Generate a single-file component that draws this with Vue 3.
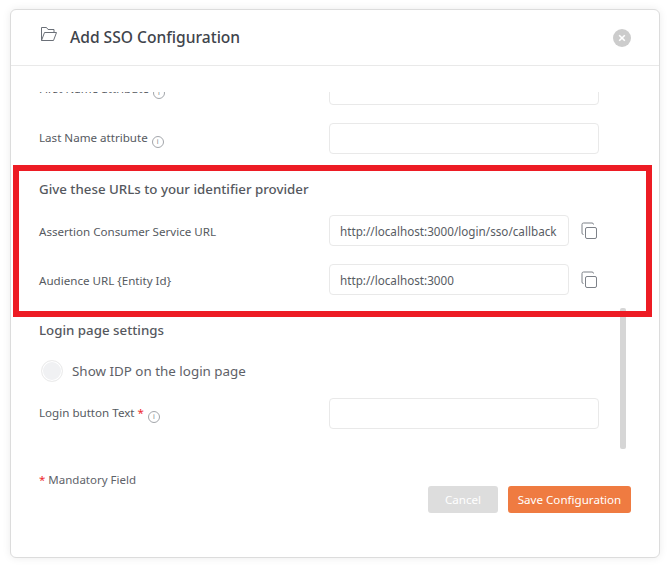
<script setup>
const hiddenRow = { label: 'First Name attribute', info: true }
const urls = [
  { label: 'Assertion Consumer Service URL', value: 'http://localhost:3000/login/sso/callback' },
  { label: 'Audience URL {Entity Id}', value: 'http://localhost:3000' }
]
</script>

<template>
  <div class="page">
    <div class="modal">
      <header class="head">
        <svg class="folder" width="18" height="17" viewBox="0 0 18 17" fill="none" stroke="#6b7078" stroke-width="1">
          <path d="M1.5 14.5V1.5h5l1.5 2h6v3" />
          <path d="M1.5 14.5l3-8h12l-3 8z" />
        </svg>
        <h1 class="title">Add SSO Configuration</h1>
        <button class="close" type="button">
          <svg width="8" height="8" viewBox="0 0 8 8" stroke="#fff" stroke-width="1.6"><path d="M1.2 1.2l5.6 5.6M6.8 1.2L1.2 6.8" /></svg>
        </button>
      </header>

      <div class="body">
        <div class="scroll">
          <div class="content">
            <div class="row first">
              <label class="label">{{ hiddenRow.label }} <span class="info">i</span></label>
              <input class="input" />
            </div>
            <div class="row">
              <label class="label">Last Name attribute <span class="info">i</span></label>
              <input class="input" />
            </div>
            <h2 class="section urls">Give these URLs to your identifier provider</h2>
            <div v-for="u in urls" :key="u.label" class="row">
              <label class="label">{{ u.label }}</label>
              <input class="input short" :value="u.value" readonly />
              <svg class="copy" width="17" height="17" viewBox="0 0 17 17" fill="none" stroke="#7d8188" stroke-width="1">
                <rect x="4.5" y="5.5" width="11" height="11" rx="1.5" />
                <path d="M2.5 12.5A1.5 1.5 0 0 1 1 11V2.5A1.5 1.5 0 0 1 2.5 1H11a1.5 1.5 0 0 1 1.5 1.5" />
              </svg>
            </div>
            <h2 class="section login">Login page settings</h2>
            <div class="toggle-row">
              <span class="toggle"></span>
              <span class="toggle-text">Show IDP on the login page</span>
            </div>
            <div class="row">
              <label class="label">Login button Text <span class="req">*</span> <span class="info">i</span></label>
              <input class="input" />
            </div>
          </div>
        </div>
      </div>

      <footer class="foot">
        <p class="mandatory"><span class="req">*</span> Mandatory Field</p>
        <div class="actions">
          <button class="btn cancel" type="button">Cancel</button>
          <button class="btn save" type="button">Save Configuration</button>
        </div>
      </footer>

      <div class="thumb"></div>
    </div>
    <div class="highlight"></div>
  </div>
</template>

<style>
html, body { margin: 0; background: #fff; }
</style>

<style scoped>
.page {
  position: relative;
  width: 667px;
  height: 565px;
  padding: 9px 0 0 10px;
  box-sizing: border-box;
  overflow: hidden;
  font-family: "Noto Sans", "Open Sans", sans-serif;
  color: #4d5159;
}
.modal {
  position: relative;
  width: 650px;
  height: 549px;
  box-sizing: border-box;
  border: 1px solid #dcdcdc;
  border-radius: 6px;
  background: #fff;
  box-shadow: 0 0 8px rgba(0, 0, 0, 0.08);
  display: flex;
  flex-direction: column;
}
.head {
  height: 56px;
  flex: none;
  box-sizing: border-box;
  border-bottom: 1px solid #e9e9e9;
  display: flex;
  align-items: center;
  padding: 0 28px 0 29px;
}
.folder { margin: -6px 12px 0 0; flex: none; }
.title {
  flex: 1;
  margin: -1px 0 0;
  font-size: 15.6px;
  font-weight: 500;
  color: #3f444c;
}
.close {
  width: 18px;
  height: 18px;
  border: 0;
  padding: 0;
  border-radius: 50%;
  background: #cccccc;
  display: flex;
  align-items: center;
  justify-content: center;
}
.body { padding-top: 26px; flex: none; }
.scroll { height: 357px; overflow: hidden; }
.content { margin-top: -18px; padding-left: 28px; }
.row {
  display: flex;
  align-items: center;
  height: 31px;
  margin-bottom: 18px;
}
.label {
  width: 290px;
  flex: none;
  padding-top: 1px;
  font-size: 11.6px;
  color: #565a61;
}
.input {
  width: 270px;
  height: 31px;
  box-sizing: border-box;
  border: 1px solid #e9e9e9;
  border-radius: 4px;
  padding: 0 10px;
  font: inherit;
  font-size: 11.7px;
  color: #585c63;
  outline: none;
  background: #fff;
}
.input.short { width: 240px; }
.copy { margin-left: 12px; flex: none; }
.info {
  display: inline-flex;
  align-items: center;
  justify-content: center;
  width: 10px;
  height: 10px;
  margin-left: 1px;
  border: 1px solid #a3a6ab;
  border-radius: 50%;
  font-size: 7px;
  line-height: 1;
  color: #80848a;
  vertical-align: -2px;
}
.req { color: #ee2a2e; }
.section {
  margin: 0;
  font-size: 13.3px;
  font-weight: 500;
  color: #55585e;
}
.urls { margin: 26px 0 17px; }
.login { margin-top: 26px; }
.toggle-row {
  display: flex;
  align-items: center;
  margin: 21px 0 16px 2px;
}
.toggle {
  width: 22px;
  height: 22px;
  box-sizing: border-box;
  border-radius: 50%;
  border: 1px solid #ececec;
  background: #f0f1f3;
  box-shadow: inset 0 0 0 1px #fff;
}
.toggle-text { margin-left: 9px; font-size: 13.4px; color: #5e6167; }
.foot {
  flex: 1;
  position: relative;
  padding: 0 28px;
}
.mandatory { margin: 0; padding-top: 23px; font-size: 11.5px; color: #5e6269; }
.actions {
  position: absolute;
  right: 28px;
  top: 37px;
  display: flex;
  gap: 10px;
}
.btn {
  height: 27px;
  border: 0;
  border-radius: 3px;
  font: inherit;
  font-size: 11.6px;
  color: #fff;
}
.cancel { width: 70px; background: #dddddd; }
.save { width: 123px; background: #ef7b41; }
.thumb {
  position: absolute;
  left: 609px;
  top: 298px;
  width: 6px;
  height: 141px;
  border-radius: 2px;
  background: #d6d6d6;
}
.highlight {
  position: absolute;
  left: 13px;
  top: 165px;
  width: 639px;
  height: 152px;
  box-sizing: border-box;
  border: 6px solid #ed1c24;
  pointer-events: none;
}
</style>
